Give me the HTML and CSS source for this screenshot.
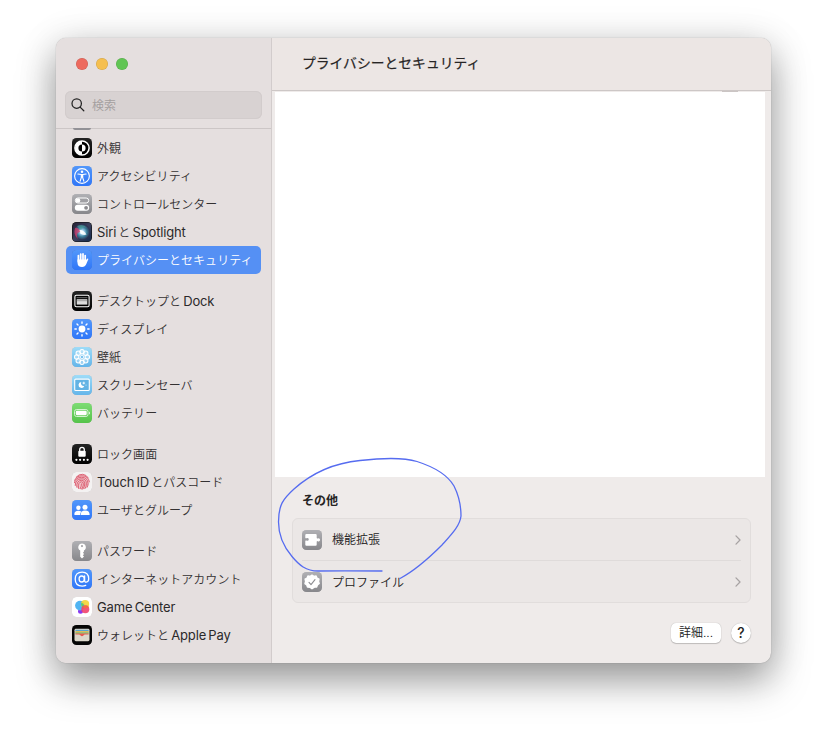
FILE: index.html
```html
<!DOCTYPE html>
<html lang="ja">
<head>
<meta charset="utf-8">
<title>プライバシーとセキュリティ</title>
<link rel="stylesheet" href="styles.css">
</head>
<body>
<svg class="defs" aria-hidden="true">
  <defs>
    <linearGradient id="blue" x2="0" y2="1"><stop stop-color="#5297fa"/><stop offset="1" stop-color="#2f76f8"/></linearGradient>
    <linearGradient id="sky" x2="0" y2="1"><stop stop-color="#9edcf8"/><stop offset="1" stop-color="#64b5ea"/></linearGradient>
    <linearGradient id="gray" x2="0" y2="1"><stop stop-color="#b0b0b4"/><stop offset="1" stop-color="#87878b"/></linearGradient>
    <linearGradient id="green" x2="0" y2="1"><stop stop-color="#7ddc74"/><stop offset="1" stop-color="#55c34a"/></linearGradient>
    <linearGradient id="black" x2="0" y2="1"><stop stop-color="#242424"/><stop offset="1" stop-color="#000"/></linearGradient>
    <radialGradient id="siri"><stop stop-color="#fff"/><stop offset=".25" stop-color="#a5cfee"/><stop offset=".6" stop-color="#3c7f9b"/><stop offset="1" stop-color="#2c2c4c"/></radialGradient>
    <linearGradient id="siribg" x2="1" y2="1"><stop stop-color="#241f32"/><stop offset=".5" stop-color="#3b3f5d"/><stop offset="1" stop-color="#132a4c"/></linearGradient>
  </defs>
</svg>
<div class="window">
  <aside class="sidebar">
    <div class="lights"><i class="red"></i><i class="yellow"></i><i class="green"></i></div>
    <div class="search">
      <svg width="14" height="14" viewBox="0 0 14 14" fill="none" stroke="#222" stroke-width="1.25" stroke-linecap="round"><circle cx="5.7" cy="5.6" r="4.7"/><path d="M9.1 9.1 12.8 12.8"/></svg>
      <span>検索</span>
    </div>
    <nav class="list">
      <div class="peek"></div>
      <section>
        <div class="row"><svg class="icon" viewBox="0 0 20 20"><rect width="20" height="20" rx="4.6" fill="url(#black)"/><circle cx="10" cy="10" r="7.1" fill="#000" stroke="#fff" stroke-width="1.5"/><path d="M10 3a7 7 0 0 0 0 14v-3.4a3.6 3.6 0 0 1 0-7.2z" fill="#fff"/><path d="M10 6.4a3.6 3.6 0 0 1 0 7.2z" fill="#fff"/></svg><span class="jp">外観</span></div>
        <div class="row"><svg class="icon" viewBox="0 0 20 20"><rect width="20" height="20" rx="4.6" fill="url(#blue)"/><circle cx="10" cy="10" r="7.4" fill="none" stroke="#fff" stroke-width="1.1"/><circle cx="10" cy="5.8" r="1.25" fill="#fff"/><path d="M5.9 8 9 8.5h2l3.1-.5M10 8.5v2.6M9.3 8.7v3l-1.2 3.5M10.7 8.7v3l1.2 3.5" fill="none" stroke="#fff" stroke-width="1.1" stroke-linecap="round"/></svg><span class="jp">アクセシビリティ</span></div>
        <div class="row"><svg class="icon" viewBox="0 0 20 20"><rect width="20" height="20" rx="4.6" fill="url(#gray)"/><rect x="3.3" y="4" width="13.4" height="5" rx="2.5" fill="#a0a0a4" stroke="#fff" stroke-width="1"/><circle cx="6" cy="6.5" r="2.3" fill="#fff"/><rect x="2.8" y="10.8" width="14.4" height="6" rx="3" fill="#fff"/><circle cx="14.1" cy="13.8" r="1.9" fill="#8b8b8f"/></svg><span class="jp">コントロールセンター</span></div>
        <div class="row"><svg class="icon" viewBox="0 0 20 20"><rect width="20" height="20" rx="4.6" fill="#111"/><rect x=".6" y=".6" width="18.8" height="18.8" rx="4" fill="url(#siribg)"/><circle cx="10" cy="10" r="8" fill="url(#siri)"/><path d="M3 6Q.8 13 6 17C3.5 12 6 9.8 9 10Q6 5 3 6" fill="#e0386a" opacity=".7"/><path d="M5 4q6-3 10 2-4-2-6 2z" fill="#50a59a" opacity=".55"/><path d="M7.5 8q4-.5 7 4.6-3.600 1-6-.8z" fill="#fff" opacity=".9"/></svg><span><b>Siri</b> と <b>Spotlight</b></span></div>
        <div class="row selected"><svg class="icon" viewBox="0 0 20 20"><rect width="20" height="20" rx="4.6" fill="url(#blue)"/><path d="M6.4 5.5v6M8.7 4v7M11 3.9v7M13.2 5.5v7" stroke="#fff" stroke-width="1.75" stroke-linecap="round"/><path d="M5.5 9.500h8.600v.6l1-1.3q1-.7 1.3.3l-2.1 5q-1.2 2.900-4.200 2.900-4.600 0-4.600-4.500z" fill="#fff"/></svg><span class="jp">プライバシーとセキュリティ</span></div>
      </section>
      <section>
        <div class="row"><svg class="icon" viewBox="0 0 20 20"><rect width="20" height="20" rx="4.6" fill="url(#black)"/><rect x="2.9" y="4.300" width="14.200" height="11.400" rx="1.5" fill="#000" stroke="#fff" stroke-width="1.1"/><path d="M4.500 6.700h11" stroke="#777" stroke-width=".9"/><rect x="4.700" y="8.200" width="10.600" height="5.400" fill="#ddd"/><path d="M4.700 9.700h10.600" stroke="#777" stroke-width=".6"/></svg><span>デスクトップと <b>Dock</b></span></div>
        <div class="row"><svg class="icon" viewBox="0 0 20 20"><rect width="20" height="20" rx="4.6" fill="url(#blue)"/><circle cx="10" cy="10" r="3.4" fill="#fff"/><path d="M10 2.9v1.4M10 15.7v1.4M2.9 10h1.4M15.7 10h1.4M5 5l1 1M14 14l1 1M15 5l-1 1M6 14l-1 1" stroke="#fff" stroke-width="1.4" stroke-linecap="round"/></svg><span class="jp">ディスプレイ</span></div>
        <div class="row"><svg class="icon" viewBox="0 0 20 20"><rect width="20" height="20" rx="4.6" fill="url(#sky)"/><g fill="#fff" fill-opacity=".3" stroke="#fff" stroke-width="1.05"><circle cx="10" cy="4.7" r="2.2"/><circle cx="13.750" cy="6.250" r="2.2"/><circle cx="15.3" cy="10" r="2.2"/><circle cx="13.750" cy="13.750" r="2.2"/><circle cx="10" cy="15.3" r="2.2"/><circle cx="6.250" cy="13.750" r="2.2"/><circle cx="4.7" cy="10" r="2.2"/><circle cx="6.250" cy="6.250" r="2.2"/></g><circle cx="10" cy="10" r="1.8" fill="#7bc3ef" stroke="#fff" stroke-width=".9"/></svg><span class="jp">壁紙</span></div>
        <div class="row"><svg class="icon" viewBox="0 0 20 20"><rect width="20" height="20" rx="4.6" fill="url(#sky)"/><rect x="2.7" y="4.1" width="14.6" height="11.4" rx="1" fill="#62b3e4" stroke="#fff" stroke-width="1.1"/><path d="M9.3 6.9a3 3 0 1 0 3 4.1 2.8 2.8 0 0 1-3-4.1z" fill="#fff"/><path d="m11.8 6.7.4 1 .9.3-.9.4-.4.9-.4-.9-.9-.4.9-.3zM14 9.4v1.6" fill="#fff" stroke="#fff" stroke-width=".4"/></svg><span class="jp">スクリーンセーバ</span></div>
        <div class="row"><svg class="icon" viewBox="0 0 20 20"><rect width="20" height="20" rx="4.6" fill="url(#green)"/><rect x="2.5" y="6.5" width="13.5" height="7" rx="2.1" fill="none" stroke="#dff6dc" stroke-width=".9"/><rect x="3.8" y="7.8" width="10.9" height="4.4" rx="1.1" fill="#fff"/><path d="M17 8.5q1 .5 1 1.5t-1 1.5z" fill="#e8f9e6"/></svg><span class="jp">バッテリー</span></div>
      </section>
      <section>
        <div class="row"><svg class="icon" viewBox="0 0 20 20"><rect width="20" height="20" rx="4.6" fill="url(#black)"/><path d="M7.7 7V5.6q0-2.3 2.3-2.3t2.3 2.3V7" fill="none" stroke="#fff" stroke-width="1.3"/><rect x="6.3" y="6.7" width="7.4" height="6" rx="1" fill="#fff"/><g fill="#fff"><circle cx="4.4" cy="15.8" r="1.1"/><circle cx="8.1" cy="15.8" r="1.1"/><circle cx="11.9" cy="15.8" r="1.1"/><circle cx="15.6" cy="15.8" r="1.1"/></g></svg><span class="jp">ロック画面</span></div>
        <div class="row"><svg class="icon" viewBox="0 0 20 20"><rect width="20" height="20" rx="4.6" fill="#f4f2f2"/><circle cx="10" cy="10" r="7.500" fill="#e57585" opacity=".35"/><g fill="none" stroke="#dc5f72" stroke-width=".95" stroke-linecap="round"><path d="M4.1 5.2Q7 1.8 10.8 2.3q3.6.4 5.4 3.5M2.6 8.3Q4.4 3.8 9.8 3.8q6.5 0 7.6 6M2.4 10.7q1-5.4 7.2-5.4 6 0 6.4 6 0 2-.7 3.8M3.2 13.5q0-6.6 6.4-6.7 4.8 0 4.8 5.1 0 2.6-1.4 4.6M4.8 15.2q-.5-6.9 5-6.9 3 0 3 3.6 0 3-2 5.2M6.5 16.4q-.8-6.4 3.1-6.6 2.2.1 1.7 3.3-.3 2-1.6 3.9M8.2 16.7q1.2-2 1.3-4.8"/></g></svg><span><b>Touch ID</b> とパスコード</span></div>
        <div class="row"><svg class="icon" viewBox="0 0 20 20"><rect width="20" height="20" rx="4.6" fill="url(#blue)"/><g fill="#fff"><circle cx="6.4" cy="7.8" r="2.2"/><path d="M2.3 14.5q0-3.7 4-3.7 2.1 0 3.1 1-1.3 1.1-1.4 3.2H2.8z"/><circle cx="13" cy="7.2" r="2.5"/><path d="M8.6 15q0-4.4 4.5-4.4t4.6 4.4z"/></g></svg><span class="jp">ユーザとグループ</span></div>
      </section>
      <section>
        <div class="row"><svg class="icon" viewBox="0 0 20 20"><rect width="20" height="20" rx="4.6" fill="url(#gray)"/><path fill="#fff" fill-rule="evenodd" d="M10 2.4a3.8 3.8 0 0 0-1.8 7.1v6.3l1.8 1.7 2-2-1.2-1.3 1.3-1.3-1.2-1.2 1-1V9.5A3.8 3.8 0 0 0 10 2.4zm0 1.6a1.1 1.1 0 1 1 0 2.2A1.1 1.1 0 0 1 10 4z"/></svg><span class="jp">パスワード</span></div>
        <div class="row"><svg class="icon" viewBox="0 0 20 20"><rect width="20" height="20" rx="4.6" fill="url(#blue)"/><g fill="none" stroke="#fff" stroke-width="1.3" stroke-linecap="round"><ellipse cx="9.7" cy="10" rx="2.6" ry="3"/><path d="M12.6 7v4.4q0 1.8 1.7 1.7 2.4-.2 2.4-3.3 0-6.6-6.5-6.7-7 0-7 7t7 7q2.1 0 3.5-.7"/></g></svg><span class="jp">インターネットアカウント</span></div>
        <div class="row"><svg class="icon" viewBox="0 0 20 20"><rect width="20" height="20" rx="4.6" fill="#fff"/><circle cx="8.5" cy="14.3" r="2.5" fill="#8a37ef"/><circle cx="8" cy="8.6" r="4.9" fill="#51b4f2"/><circle cx="13.100" cy="7.100" r="4.100" fill="#f3d435" opacity=".9"/><path d="M9.200 5.800a4.900 4.900 0 0 1 3.500 4.200l-.8 1Q8.500 9.600 9.200 5.800" fill="#57c877"/><circle cx="13.3" cy="12.3" r="4" fill="#f04770" opacity=".92"/><path d="M10.300 10q2-2.300 5.300-1.300l1.300 1.500-4 1.3z" fill="#f07436" opacity=".8"/></svg><span><b>Game Center</b></span></div>
        <div class="row"><svg class="icon" viewBox="0 0 20 20"><rect width="20" height="20" rx="4.6" fill="#050505"/><rect x="2.5" y="3.800" width="15" height="12.400" rx="1.400" fill="#ddd8cc"/><path d="M3.400 4.800h13.200v1.500H3.400z" fill="#5aa4d0"/><path d="M3.400 6.200h13.200v1.300H3.400z" fill="#e9b940"/><path d="M3.400 7.400h13.200v1.300H3.400z" fill="#70b963"/><path d="M3.400 8.600h13.200v1h-3.700q-.7 0-1.200.7-1.700 1.900-3.400 0-.5-.7-1.200-.7H3.400z" fill="#e65c50"/></svg><span>ウォレットと <b>Apple Pay</b></span></div>
      </section>
    </nav>
  </aside>
  <main class="main">
    <header>プライバシーとセキュリティ</header>
    <div class="blank"><i></i></div>
    <h2>その他</h2>
    <div class="card">
      <div class="item"><svg class="icon" viewBox="0 0 20 20"><rect width="20" height="20" rx="4.6" fill="url(#gray)"/><path fill="#fff" d="M4.400 4h9.200q1.100 0 1.100 1.100v3q.4.6 1 .3 2.100-.9 2.400 1.400-.3 2.300-2.400 1.400-.6-.3-1 .3v3.200q0 1.100-1.100 1.100H4.400q-1.100 0-1.100-1.100v-3.900q.5-.6 1.200-.2 2 .8 2.300-1.200-.3-2-2.300-1.200-.7.4-1.200-.2V5.100Q3.300 4 4.400 4z"/></svg><span>機能拡張</span><svg class="chev" viewBox="0 0 6 10"><path d="M1 .9 5 5 1 9.1"/></svg></div>
      <div class="item"><svg class="icon" viewBox="0 0 20 20"><rect width="20" height="20" rx="4.6" fill="url(#gray)"/><path fill="#fff" stroke="#fff" stroke-width="1.4" stroke-linejoin="round" d="m10 3.2 1.9 1.2 2.2-.4.9 2.1 2 1.1-.5 2.2.7 2.1-1.8 1.4-.7 2.1-2.3.1L10 16.8l-2.1-1.6-2.4-.1-.7-2.1L3 11.6l.6-2.2L3.1 7.2l2-1.1.8-2.1 2.3.4z"/><path d="m7 10.3 2 2.3 4-5" fill="none" stroke="#8d8d91" stroke-width="1.1" stroke-linecap="round" stroke-linejoin="round"/></svg><span>プロファイル</span><svg class="chev" viewBox="0 0 6 10"><path d="M1 .9 5 5 1 9.1"/></svg></div>
    </div>
    <div class="actions"><button class="detail">詳細...</button><button class="help">?</button></div>
  </main>
</div>
<svg class="scribble" viewBox="270 450 200 140" width="200" height="140" fill="none" stroke="#566cf0" stroke-width="1.3" stroke-linecap="round"><path d="M382 571Q340 570.6 318 571C306 571 299 565 292 556.500C283 546 278.500 535 278.500 522C278.500 505 283 499 294 489C312 473 334 463 360 460.500C382 458 404 457.500 417 461.500C431 466 447 474 454 486C459 496 461 506 461 516C460 526 451 535 442 545C430 557 414 571 400 578.500"/></svg>
</body>
</html>
```
FILE: styles.css
```css
* { box-sizing: border-box; }
html, body { height: 100%; }
body {
  margin: 0;
  padding: 38px 56px 0;
  overflow: hidden;
  background: #fff;
  color: #343132;
  font: 350 12px/20px Inter, "Noto Sans CJK JP", sans-serif;
}
.defs { position: absolute; width: 0; height: 0; }
.window {
  display: flex;
  width: 715px;
  height: 625px;
  border-radius: 10px;
  overflow: hidden;
  background: #efebea;
  box-shadow: 0 0 1px rgba(0,0,0,.4), 0 18px 38px rgba(0,0,0,.36), 0 4px 40px rgba(0,0,0,.12);
}
.sidebar {
  display: flex;
  flex-direction: column;
  width: 216px;
  background: #e5dfdf;
  border-right: 1px solid #d2cccc;
}
.lights { display: flex; gap: 8px; padding: 20px 0 0 20px; height: 53px; }
.lights i { width: 12px; height: 12px; border-radius: 50%; box-shadow: inset 0 0 0 .5px rgba(0,0,0,.15); }
.red { background: #ed6a5e; }
.yellow { background: #f5bf4f; }
.green { background: #61c554; }
.search {
  display: flex;
  align-items: center;
  gap: 7px;
  height: 28px;
  margin: 0 9px 9px;
  padding-left: 6px;
  border-radius: 6px;
  background: #d8d2d2;
  box-shadow: inset 0 0 0 1px #d2cccc;
  color: #a39e9e;
}
.search span, .jp { padding-top: 2px; }
.list { border-top: 1px solid #ccc6c6; padding: 0 10px; }
.peek { width: 18px; height: 2px; margin: -1px 0 4px 7px; border-radius: 0 0 5px 5px; background: #929196; }
.list section { margin-bottom: 13px; }
.row {
  display: flex;
  align-items: center;
  gap: 5px;
  height: 28px;
  padding-left: 6px;
  border-radius: 5px;
  white-space: nowrap;
}
.row b { font-weight: 400; font-size: 13px; letter-spacing: -.15px; color: #2b292a; }
.row span { word-spacing: -1.2px; }
.row .jp { letter-spacing: .04px; }
.icon { flex: none; width: 20px; height: 20px; filter: drop-shadow(0 .5px .5px rgba(0,0,0,.2)); }
.selected { background: #5590f4; color: #fff; }
.main { flex: 1; display: flex; flex-direction: column; }
header {
  height: 53px;
  padding: 15px 30px 0;
  border-bottom: 1px solid #cdc7c6;
  background: #ece6e4;
  color: #272525;
  font-size: 13.8px;
  font-weight: 400;
  -webkit-text-stroke: .2px #272525;
}
.blank { height: 385px; margin: 1px 6px 0 3px; background: #fff; }
.blank i { display: block; width: 16px; height: 1px; margin: -1px 27px 0 auto; background: #cbc5c4; }
h2 { margin: 14px 0 7px 30px; font-size: 12px; font-weight: 700; line-height: 20px; color: #252323; }
.card {
  height: 85px;
  margin: 0 20px;
  padding: 0 9px;
  border: 1px solid #e1dddc;
  border-radius: 6px;
  background: #ebe7e6;
  color: #242223;
}
.item { display: flex; align-items: center; height: 41px; gap: 10px; }
.item span { padding-top: 1px; }
.item + .item { height: 43px; border-top: 1px solid #dfdbda; }
.chev { width: 6px; height: 10px; margin-left: auto; fill: none; stroke: #a7a3a3; stroke-width: 1.3; stroke-linecap: round; stroke-linejoin: round; }
.actions { display: flex; justify-content: flex-end; gap: 10px; padding: 20px 20px 0; }
button {
  height: 20px;
  padding: 0;
  border: 0;
  background: #fff;
  color: #222;
  font: 350 12px/20px Inter, "Noto Sans CJK JP", sans-serif;
  box-shadow: 0 0 1px rgba(0,0,0,.3), 0 1px 1px rgba(0,0,0,.18);
}
.detail { width: 50px; border-radius: 5px; }
.help { width: 20px; border-radius: 50%; font-size: 14px; font-weight: 500; }
.scribble { position: absolute; left: 270px; top: 450px; pointer-events: none; }
```
